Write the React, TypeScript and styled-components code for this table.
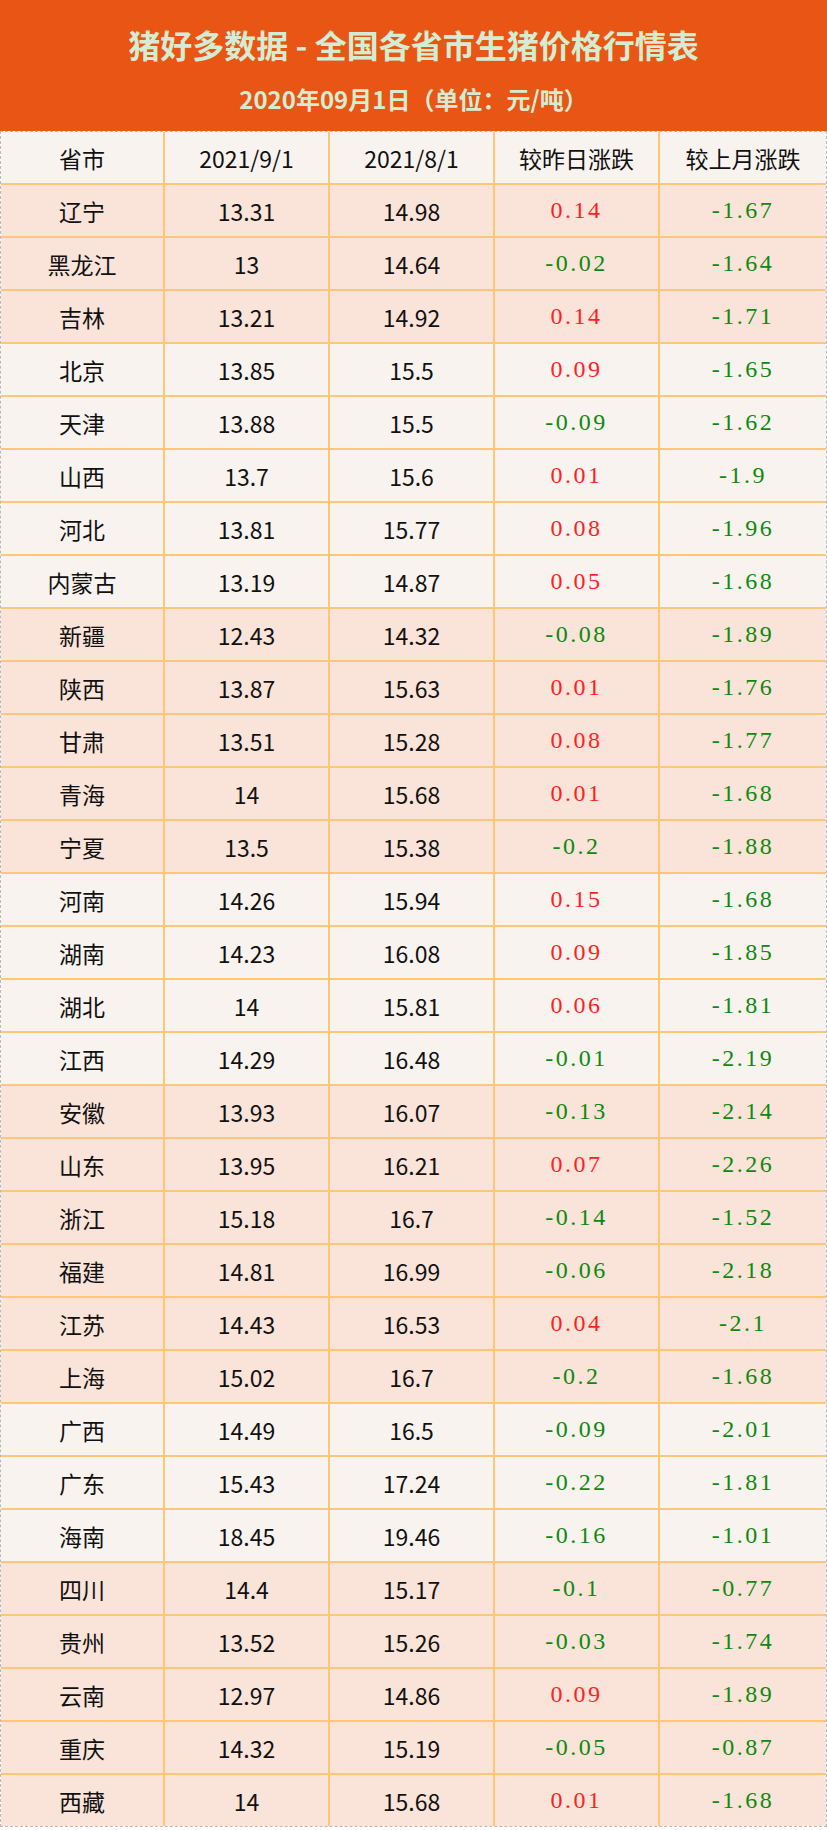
import React from 'react';
import styled, { createGlobalStyle } from 'styled-components';

// 生猪价格行情表
type Row = {
  province: string;
  current: string;
  lastMonth: string;
  dayChange: string;
  monthChange: string;
  shaded: boolean;
};

const raw: [string, string, string, string, string, number][] = [
  ['辽宁', '13.31', '14.98', '0.14', '-1.67', 1],
  ['黑龙江', '13', '14.64', '-0.02', '-1.64', 1],
  ['吉林', '13.21', '14.92', '0.14', '-1.71', 1],
  ['北京', '13.85', '15.5', '0.09', '-1.65', 0],
  ['天津', '13.88', '15.5', '-0.09', '-1.62', 0],
  ['山西', '13.7', '15.6', '0.01', '-1.9', 0],
  ['河北', '13.81', '15.77', '0.08', '-1.96', 0],
  ['内蒙古', '13.19', '14.87', '0.05', '-1.68', 0],
  ['新疆', '12.43', '14.32', '-0.08', '-1.89', 1],
  ['陕西', '13.87', '15.63', '0.01', '-1.76', 1],
  ['甘肃', '13.51', '15.28', '0.08', '-1.77', 1],
  ['青海', '14', '15.68', '0.01', '-1.68', 1],
  ['宁夏', '13.5', '15.38', '-0.2', '-1.88', 1],
  ['河南', '14.26', '15.94', '0.15', '-1.68', 0],
  ['湖南', '14.23', '16.08', '0.09', '-1.85', 0],
  ['湖北', '14', '15.81', '0.06', '-1.81', 0],
  ['江西', '14.29', '16.48', '-0.01', '-2.19', 0],
  ['安徽', '13.93', '16.07', '-0.13', '-2.14', 1],
  ['山东', '13.95', '16.21', '0.07', '-2.26', 1],
  ['浙江', '15.18', '16.7', '-0.14', '-1.52', 1],
  ['福建', '14.81', '16.99', '-0.06', '-2.18', 1],
  ['江苏', '14.43', '16.53', '0.04', '-2.1', 1],
  ['上海', '15.02', '16.7', '-0.2', '-1.68', 1],
  ['广西', '14.49', '16.5', '-0.09', '-2.01', 0],
  ['广东', '15.43', '17.24', '-0.22', '-1.81', 0],
  ['海南', '18.45', '19.46', '-0.16', '-1.01', 0],
  ['四川', '14.4', '15.17', '-0.1', '-0.77', 1],
  ['贵州', '13.52', '15.26', '-0.03', '-1.74', 1],
  ['云南', '12.97', '14.86', '0.09', '-1.89', 1],
  ['重庆', '14.32', '15.19', '-0.05', '-0.87', 1],
  ['西藏', '14', '15.68', '0.01', '-1.68', 1],
];

const rows: Row[] = raw.map(([province, current, lastMonth, dayChange, monthChange, shaded]) => ({
  province,
  current,
  lastMonth,
  dayChange,
  monthChange,
  shaded: shaded === 1,
}));

const GlobalStyle = createGlobalStyle`
  body {
    margin: 0;
    background: #ffffff;
    font-family: "Noto Sans CJK SC", "Noto Sans", sans-serif;
  }
`;

const Page = styled.div`
  width: 827px;
`;

const Banner = styled.header`
  height: 131px;
  background: #e95515;
  color: #d4edd2;
  display: flex;
  flex-direction: column;
  align-items: center;
  box-sizing: border-box;
  padding-top: 21px;
`;

const Title = styled.h1`
  margin: 0;
  font-size: 32px;
  line-height: 46px;
  font-weight: 700;
`;

const Subtitle = styled.div`
  margin-top: 16px;
  font-size: 24px;
  line-height: 32px;
  font-weight: 700;
`;

const Table = styled.div`
  border: 1px dashed #b9b9b9;
`;

const TableRow = styled.div<{ $shaded: boolean; $last?: boolean }>`
  display: grid;
  grid-template-columns: 164px 165px 165px 165px 1fr;
  height: ${(p) => (p.$last ? '51px' : '53px')};
  box-sizing: border-box;
  background: ${(p) => (p.$shaded ? '#fae3d8' : '#f9f3ef')};
  border-bottom: ${(p) => (p.$last ? 'none' : '2px solid #fcc878')};
`;

const Cell = styled.div`
  display: flex;
  align-items: center;
  justify-content: center;
  border-right: 2px solid #fcc878;
  font-size: 23px;
  color: #111111;

  &:last-child {
    border-right: none;
  }
`;

const ChangeCell = styled(Cell)<{ $up: boolean }>`
  font-family: "Liberation Serif", "DejaVu Serif", serif;
  font-size: 24px;
  letter-spacing: 2.5px;
  color: ${(p) => (p.$up ? '#ff1f1f' : '#0e8a0e')};
`;

const isUp = (v: string) => !v.startsWith('-');

const App: React.FC = () => {
  return (
    <Page>
      <GlobalStyle />
      <Banner>
        <Title>猪好多数据 - 全国各省市生猪价格行情表</Title>
        <Subtitle>2020年09月1日（单位：元/吨）</Subtitle>
      </Banner>
      <Table>
        <TableRow $shaded={false}>
          <Cell>省市</Cell>
          <Cell>2021/9/1</Cell>
          <Cell>2021/8/1</Cell>
          <Cell>较昨日涨跌</Cell>
          <Cell>较上月涨跌</Cell>
        </TableRow>
        {rows.map((r, i) => (
          <TableRow key={r.province} $shaded={r.shaded} $last={i === rows.length - 1}>
            <Cell>{r.province}</Cell>
            <Cell>{r.current}</Cell>
            <Cell>{r.lastMonth}</Cell>
            <ChangeCell $up={isUp(r.dayChange)}>{r.dayChange}</ChangeCell>
            <ChangeCell $up={isUp(r.monthChange)}>{r.monthChange}</ChangeCell>
          </TableRow>
        ))}
      </Table>
    </Page>
  );
};

export default App;
